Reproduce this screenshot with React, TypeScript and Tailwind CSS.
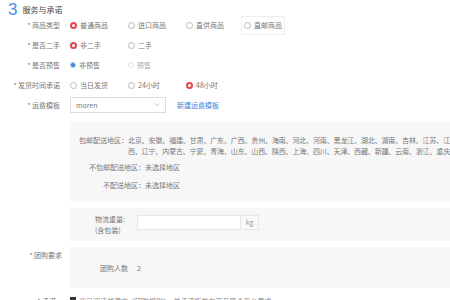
import React from "react";

type Kind = "on" | "off" | "blue" | "faint";

const Dot = ({ kind }: { kind: Kind }) => {
    if (kind === "on")
        return <span className="w-[7px] h-[7px] rounded-full border-2 border-[#e2474b] bg-white shrink-0" />;
    if (kind === "blue")
        return <span className="w-[6px] h-[6px] rounded-full border border-[#a9ccee] bg-[#3f8ad8] shrink-0" />;
    if (kind === "faint")
        return <span className="w-[6px] h-[6px] rounded-full border border-[#e2e2e2] bg-white shrink-0" />;
    return <span className="w-[7px] h-[7px] rounded-full border border-[#b8b8b8] bg-white shrink-0" />;
};

const Opt = ({ kind, text, boxed }: { kind: Kind; text: string; boxed?: boolean }) => (
    <div className="w-[58px] flex items-center">
        <div
            className={
                boxed
                    ? "flex items-center gap-[3px] border border-[#eeeeee] px-[2px] py-[3px] -ml-[3px]"
                    : "flex items-center gap-[3px]"
            }
        >
            <Dot kind={kind} />
            <span className={kind === "faint" ? "text-[#aaa]" : "text-[#777]"}>{text}</span>
        </div>
    </div>
);

const Row = ({ label, children }: { label: string; children: React.ReactNode }) => (
    <div className="flex items-center h-[20px]">
        <div className="w-[70px] pr-[10px] text-right text-[#777] whitespace-nowrap">* {label}</div>
        <div className="flex items-center">{children}</div>
    </div>
);

const App = () => {
    return (
        <div className="w-[450px] h-[300px] overflow-hidden bg-white font-['Noto_Sans_CJK_SC',sans-serif] text-[7px] leading-[11px]">
            {/* section title */}
            <div className="flex items-center h-[17px] pt-[2px] pl-[8px] gap-[5px] -mb-[2px]">
                <span className="text-[#4a8fdc] text-[17px] leading-[17px] font-light font-['Liberation_Sans',sans-serif]">3</span>
                <span className="text-[#444] text-[8px] leading-[12px] pt-[1px]">服务与承诺</span>
            </div>

            <Row label="商品类型">
                <Opt kind="on" text="普通商品" />
                <Opt kind="off" text="进口商品" />
                <Opt kind="off" text="直供商品" />
                <Opt kind="off" text="直邮商品" boxed />
            </Row>
            <Row label="是否二手">
                <Opt kind="on" text="非二手" />
                <Opt kind="off" text="二手" />
            </Row>
            <Row label="是否预售">
                <Opt kind="blue" text="非预售" />
                <Opt kind="faint" text="预售" />
            </Row>
            <Row label="发货时间承诺">
                <Opt kind="off" text="当日发货" />
                <Opt kind="off" text="24小时" />
                <Opt kind="on" text="48小时" />
            </Row>
            <Row label="运费模板">
                <div className="w-[96px] h-[16px] border border-[#dddddd] flex items-center justify-between px-[5px] text-[#777]">
                    <span>moren</span>
                    <svg width="6" height="4" viewBox="0 0 6 4" fill="none" stroke="#bbb" strokeWidth="0.8">
                        <path d="M0.5 0.5 L3 3 L5.5 0.5" />
                    </svg>
                </div>
                <span className="ml-[11px] text-[#3c86d3]">新建运费模板</span>
            </Row>

            <div className="ml-[70px] mt-[7px] bg-[#f7f7f7] h-[80px] pt-[13px] text-[#777] whitespace-nowrap">
                <div className="flex">
                    <div className="w-[75px] text-right">包邮配送地区：</div>
                    <div className="tracking-[-0.15px]">
                        <div>北京、安徽、福建、甘肃、广东、广西、贵州、海南、河北、河南、黑龙江、湖北、湖南、吉林、江苏、江</div>
                        <div>西、辽宁、内蒙古、宁夏、青海、山东、山西、陕西、上海、四川、天津、西藏、新疆、云南、浙江、重庆</div>
                    </div>
                </div>
                <div className="flex mt-[5px]">
                    <div className="w-[75px] text-right">不包邮配送地区：</div>
                    <div>未选择地区</div>
                </div>
                <div className="flex mt-[7px]">
                    <div className="w-[75px] text-right">不配送地区：</div>
                    <div>未选择地区</div>
                </div>
            </div>

            <div className="ml-[70px] mt-[6px] bg-[#f7f7f7] h-[33px] flex items-center pl-[25px] text-[#777]">
                <div className="w-[36px] leading-[11px]">
                    <div>物流重量:</div>
                    <div>(含包装)</div>
                </div>
                <div className="ml-[6px] -mt-[4px] flex items-stretch h-[15px] border border-[#e6e6e6]">
                    <div className="w-[102px] bg-white" />
                    <div className="w-[18px] border-l border-[#e6e6e6] bg-[#f9f9f9] flex items-center justify-center text-[#999]">kg</div>
                </div>
            </div>

            <div className="flex mt-[6px]">
                <div className="w-[70px] pr-[8px] pt-[3px] text-right text-[#777]">* 团购要求</div>
                <div className="flex-1 bg-[#f7f7f7] h-[41px] flex items-center pl-[30px] pt-[1px] text-[#777]">
                    <span className="w-[37px]">团购人数</span>
                    <span>2</span>
                </div>
            </div>

            <div className="flex items-start mt-[8px] whitespace-nowrap text-[#888]">
                <div className="w-[70px] pr-[14px] text-right text-[#777]">* 承诺</div>
                <span className="w-[6px] h-[6px] mt-[1px] bg-[#333] shrink-0" />
                <span className="ml-[3px]">我已阅读并遵守《团购规则》，并承诺所发布商品符合平台要求</span>
            </div>
        </div>
    );
};

export default App;
